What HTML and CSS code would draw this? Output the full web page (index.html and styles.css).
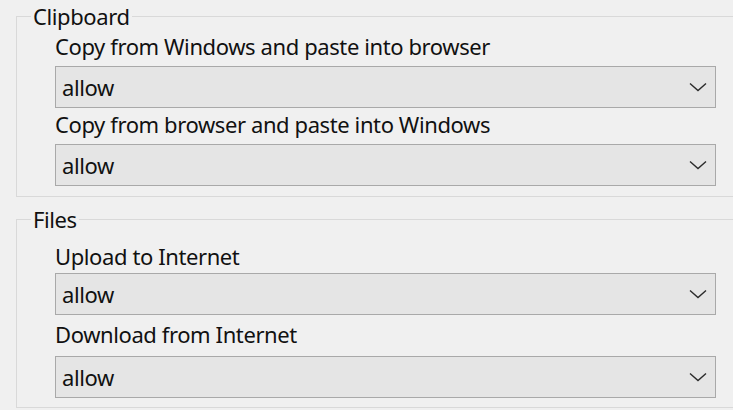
FILE: index.html
```html
<!DOCTYPE html>
<html lang="en">
<head>
  <meta charset="UTF-8" />
  <title>Clipboard and file settings</title>
  <link rel="stylesheet" href="styles.css">
</head>
<body>
  <fieldset class="group">
    <legend>Clipboard</legend>
    <div class="group-body">
      <div class="field-label">Copy from Windows and paste into browser</div>
      <div class="dropdown">
        <span class="dropdown-value">allow</span>
        <svg class="chevron" width="18" height="10" viewBox="0 0 18 10"><path d="M1 1.5 L9 8.5 L17 1.5" fill="none" stroke="#2b2b2b" stroke-width="1.4"/></svg>
      </div>
      <div class="field-label">Copy from browser and paste into Windows</div>
      <div class="dropdown">
        <span class="dropdown-value">allow</span>
        <svg class="chevron" width="18" height="10" viewBox="0 0 18 10"><path d="M1 1.5 L9 8.5 L17 1.5" fill="none" stroke="#2b2b2b" stroke-width="1.4"/></svg>
      </div>
    </div>
  </fieldset>

  <fieldset class="group files">
    <legend>Files</legend>
    <div class="group-body">
      <div class="field-label">Upload to Internet</div>
      <div class="dropdown">
        <span class="dropdown-value">allow</span>
        <svg class="chevron" width="18" height="10" viewBox="0 0 18 10"><path d="M1 1.5 L9 8.5 L17 1.5" fill="none" stroke="#2b2b2b" stroke-width="1.4"/></svg>
      </div>
      <div class="field-label">Download from Internet</div>
      <div class="dropdown">
        <span class="dropdown-value">allow</span>
        <svg class="chevron" width="18" height="10" viewBox="0 0 18 10"><path d="M1 1.5 L9 8.5 L17 1.5" fill="none" stroke="#2b2b2b" stroke-width="1.4"/></svg>
      </div>
    </div>
  </fieldset>
</body>
</html>
```

FILE: styles.css
```css
* {
  box-sizing: border-box;
}

html, body {
  overflow: hidden;
}

body {
  margin: 0;
  padding: 2px 0 0 16px;
  background: #f0f0f0;
  font-family: 'Noto Sans', sans-serif;
  font-size: 22px;
  letter-spacing: -0.4px;
  color: #111;
  width: 733px;
  height: 410px;
}

.group {
  margin: 0 -30px 0 0;
  padding: 0 16px 10px 14px;
  border: 1px solid #d9d9d9;
  min-width: 0;
}

.group legend {
  padding: 0 2px;
  line-height: 28px;
}

.group-body {
  padding-left: 24px;
  width: 661px;
  box-sizing: content-box;
  display: flex;
  flex-direction: column;
}

.field-label {
  line-height: 28px;
  margin-top: 2px;
}

.dropdown {
  margin-top: 6px;
  height: 42px;
  border: 1px solid #a9a9a9;
  background: #e5e5e5;
  display: flex;
  align-items: center;
  justify-content: space-between;
  padding: 0 8px 0 6px;
}

.dropdown-value {
  line-height: 28px;
}

/* Files group sits a little looser than Clipboard */
.files {
  margin-top: 8px;
  padding-bottom: 9px;
}

.files .field-label:nth-child(1) {
  margin-top: 9px;
}

.files .dropdown:nth-child(2) {
  margin-top: 3px;
}

.files .field-label:nth-child(3) {
  margin-top: 5px;
}

.files .dropdown:nth-child(4) {
  margin-top: 8px;
}
```
